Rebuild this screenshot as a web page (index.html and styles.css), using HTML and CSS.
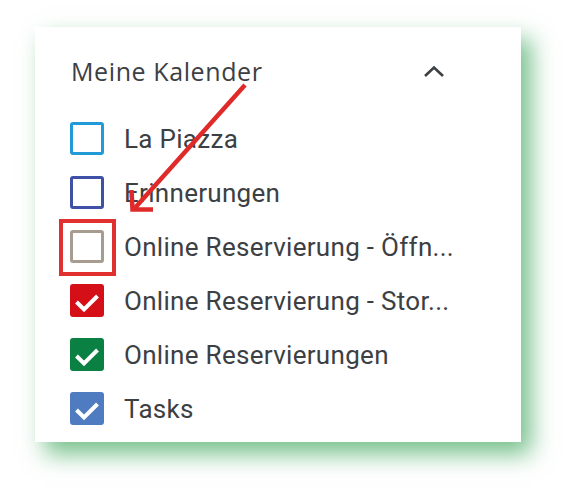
FILE: index.html
```html
<!DOCTYPE html>
<html lang="de">
<head>
<meta charset="utf-8">
<title>Meine Kalender</title>
<link rel="stylesheet" href="styles.css">
</head>
<body>
<div class="card">
  <div class="header">
    <span class="title">Meine Kalender</span>
    <svg class="chevron" width="22" height="13" viewBox="0 0 22 13"><path d="M2 11 L11 2.5 L20 11" fill="none" stroke="#3c4043" stroke-width="2.6"/></svg>
  </div>
  <ul class="list">
    <li class="row"><span class="box c-blue"></span><span class="label">La Piazza</span></li>
    <li class="row"><span class="box c-indigo"></span><span class="label">Erinnerungen</span></li>
    <li class="row"><span class="box c-grey marked"></span><span class="label">Online Reservierung - Öffn...</span></li>
    <li class="row"><span class="box c-red checked"><svg viewBox="0 0 34 33" width="34" height="33"><path d="M6.5 18 L14 25.5 L27.5 12" fill="none" stroke="#fff" stroke-width="4"/></svg></span><span class="label">Online Reservierung - Stor...</span></li>
    <li class="row"><span class="box c-green checked"><svg viewBox="0 0 34 33" width="34" height="33"><path d="M6.5 18 L14 25.5 L27.5 12" fill="none" stroke="#fff" stroke-width="4"/></svg></span><span class="label">Online Reservierungen</span></li>
    <li class="row"><span class="box c-tasks checked"><svg viewBox="0 0 34 33" width="34" height="33"><path d="M6.5 18 L14 25.5 L27.5 12" fill="none" stroke="#fff" stroke-width="4"/></svg></span><span class="label">Tasks</span></li>
  </ul>
</div>
<svg class="arrow" width="576" height="501" viewBox="0 0 576 501">
  <path d="M245 85 L134 209" fill="none" stroke="#e02a2a" stroke-width="4.5"/>
  <path d="M131.5 190 L132.5 209.5 L153 209.5" fill="none" stroke="#e02a2a" stroke-width="4.5"/>
</svg>
</body>
</html>
```
FILE: styles.css
```css
html, body {
  margin: 0;
  padding: 0;
  background: #ffffff;
}
body {
  width: 576px;
  height: 501px;
  overflow: hidden;
  position: relative;
}
.card {
  margin: 27px 0 0 35px;
  width: 486px;
  height: 415px;
  box-sizing: border-box;
  background: #ffffff;
  padding-top: 17px;
  box-shadow: 10px 12px 22px rgba(60, 165, 90, 0.7);
}
.header {
  height: 54px;
  display: flex;
  align-items: center;
  justify-content: space-between;
  padding: 0 76px 0 36px;
}
.title {
  font-family: "Open Sans", sans-serif;
  font-size: 25px;
  font-weight: 500;
  color: #3c4043;
  letter-spacing: 0.6px;
}
.chevron {
  display: block;
}
.list {
  list-style: none;
  margin: 13.5px 0 0 0;
  padding: 0 0 0 35px;
}
.row {
  height: 54px;
  display: flex;
  align-items: center;
  gap: 20px;
}
.box {
  width: 34px;
  height: 33px;
  box-sizing: border-box;
  border: 3.5px solid;
  border-radius: 3px;
  flex: none;
  position: relative;
}
.box.checked {
  border: none;
}
.box svg {
  display: block;
}
.c-blue { border-color: #229ad8; }
.c-indigo { border-color: #3f51a6; }
.c-grey { border-color: #a89c90; }
.c-red { background: #d50f18; }
.c-green { background: #0b8043; }
.c-tasks { background: #4f7bc0; }
.marked::after {
  content: "";
  position: absolute;
  left: -14.5px;
  top: -14.5px;
  right: -14.5px;
  bottom: -15.5px;
  border: 4px solid #e03030;
}
.label {
  font-family: Roboto, "Liberation Sans", sans-serif;
  font-size: 26px;
  letter-spacing: 0.3px;
  color: #3c4043;
  white-space: nowrap;
}
.arrow {
  position: absolute;
  left: 0;
  top: 0;
  pointer-events: none;
}
```
